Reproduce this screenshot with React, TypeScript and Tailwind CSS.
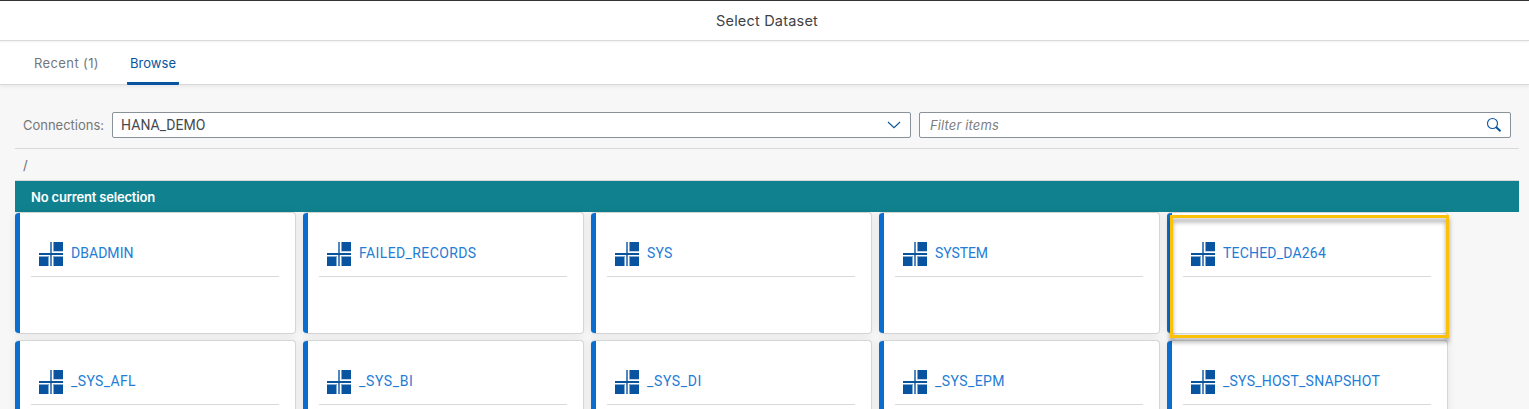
import React from "react";

type Item = { name: string; width: string; marked?: boolean };

const items: Item[] = [
  { name: "DBADMIN", width: "62.5" },
  { name: "FAILED_RECORDS", width: "117.5" },
  { name: "SYS", width: "25.5" },
  { name: "SYSTEM", width: "53" },
  { name: "TECHED_DA264", width: "103", marked: true },
  { name: "_SYS_AFL", width: "65" },
  { name: "_SYS_BI", width: "54.5" },
  { name: "_SYS_DI", width: "55" },
  { name: "_SYS_EPM", width: "70" },
  { name: "_SYS_HOST_SNAPSHOT", width: "157" },
];

/** Text set to an exact advance width. */
function Fit({ text, width, className = "" }: { text: string; width: string; className?: string }) {
  const ref = React.useRef<HTMLSpanElement>(null);
  const [spacing, setSpacing] = React.useState(0);
  React.useLayoutEffect(() => {
    if (ref.current) {
      const natural = ref.current.getBoundingClientRect().width;
      setSpacing((Number(width) - natural) / text.length);
    }
  }, [text, width]);
  return (
    <span ref={ref} className={`inline-block whitespace-nowrap ${className}`} style={{ letterSpacing: `${spacing}px` }}>
      {text}
    </span>
  );
}

function SchemaIcon() {
  return (
    <svg width="24" height="24" viewBox="0 0 24 24" className="shrink-0" fill="#0854a0">
      <path d="M15 0h9v9h-9zM0 15h9v9H0zM15 15h9v9h-9zM0 11h24v2H0z" />
      <path d="M11 0h2v24h-2z" fillOpacity=".7" />
      <path d="M14 0h1v9h-1zM14 9h10v.5H14zM0 14h10v1H0zM9 15h1v9H9zM14 14h10v1H14zM14 15h1v9h-1z" fillOpacity=".5" />
    </svg>
  );
}

function Card({ item }: { item: Item }) {
  return (
    <div className="relative h-[122px] w-[281px]">
      <div className="h-full overflow-hidden rounded-[4px] border border-l-0 border-[#d5d5d5] bg-white shadow-[0_0_8px_rgba(0,0,0,0.08)]">
        <div className="flex h-full border-l-[5px] border-[#0a6ed1] pr-4 pl-[11px]">
          <div className="flex h-16 w-[248px] items-center border-b border-[#d9d9d9] pt-[18px] pl-2 text-[#237cd6]">
            <SchemaIcon />
            <Fit text={item.name} width={item.width} className="ml-2 -translate-y-px font-[Roboto,sans-serif] text-[14px] leading-5" />
          </div>
        </div>
      </div>
      {item.marked && (
        <div className="absolute top-[3px] left-[3px] z-10 h-[123px] w-[279px] border-[3px] border-[#fbc108] drop-shadow-[0px_4px_2px_rgba(0,0,0,0.38)]" />
      )}
    </div>
  );
}

export default function App() {
  return (
    <div className="h-[409px] w-[1529px] overflow-hidden bg-[#f7f7f7] font-[Inter,'Liberation_Sans',sans-serif] text-[13px] text-[#32363a]">
      <header className="relative z-20 flex h-[41px] items-center justify-center border-t border-b border-t-[#333] border-b-[#d9d9d9] bg-white pl-[5px] shadow-[0_1px_2px_rgba(0,0,0,0.06)]">
        <Fit text="Select Dataset" width="102" className="text-[14.5px] text-[#3f4347]" />
      </header>
      <nav className="relative z-10 flex h-11 border-b border-[#d9d9d9] bg-white pl-[31px] shadow-[0_2px_3px_rgba(0,0,0,0.06)]">
        <div className="flex w-24 items-center pt-[2px] pl-[3px] text-[#74777a]">
          <Fit text="Recent (1)" width="65" />
        </div>
        <div className="flex h-11 w-[52px] items-center rounded-b-[1px] border-b-[3px] border-[#0854a0] pt-1 pl-[3px] text-[#0854a0]">
          <Fit text="Browse" width="46" />
        </div>
      </nav>
      <main className="pr-[10px] pl-[15px]">
        <div className="flex h-16 items-center border-b border-[#d9d9d9] pt-[17px] pb-0">
          <div className="ml-2 w-[89px] text-[#74777a]">
            <Fit text="Connections:" width="81" className="align-middle" />
          </div>
          <div className="flex h-[26px] w-[799px] items-center justify-between rounded-[2px] border border-[#89919a] bg-white pr-[9px] pl-2">
            <Fit text="HANA_DEMO" width="84.5" className="font-[Roboto,sans-serif] text-[14px] text-[#45494d]" />
            <svg width="14" height="8" viewBox="0 0 14 8" fill="none" stroke="#0854a0" strokeWidth="1.1">
              <path d="M1 1l6 5.7L13 1" />
            </svg>
          </div>
          <div className="ml-2 flex h-[26px] w-[592px] items-center justify-between rounded-[2px] border border-[#89919a] bg-white pr-2 pl-[10px]">
            <Fit text="Filter items" width="69" className="pt-[2px] text-[#7c7f82] italic" />
            <svg width="16" height="16" viewBox="0 0 16 16" fill="none" stroke="#0854a0">
              <circle cx="6.5" cy="6.5" r="5" strokeWidth="1.1" />
              <path d="M10 10l4.5 4.3" strokeWidth="2" />
            </svg>
          </div>
        </div>
        <div className="flex h-8 items-center border-b border-[#d9d9d9] pt-[2px] pl-2 text-[#6a6d70]">/</div>
        <div className="flex h-[31px] items-center bg-[#10828f] pl-4 text-white">
          <Fit text="No current selection" width="124" className="pt-[3px] text-[13px] font-semibold" />
        </div>
        <div className="grid grid-cols-[repeat(5,281px)] gap-x-[7px] gap-y-[6px] bg-[#f7f7f7]">
          {items.map((item) => (
            <Card key={item.name} item={item} />
          ))}
        </div>
      </main>
    </div>
  );
}
